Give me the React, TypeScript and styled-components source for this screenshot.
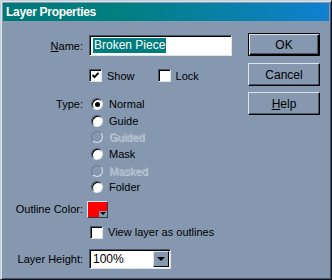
import React from "react";
import styled, { createGlobalStyle } from "styled-components";

const BG = "#8598b0";
const LIGHT = "#dce4ec";
const SHADE = "#45556a";

const GlobalStyle = createGlobalStyle`
  html, body {
    margin: 0;
    padding: 0;
    background: ${BG};
  }
  * {
    box-sizing: border-box;
  }
`;

const Window = styled.div`
  width: 332px;
  height: 280px;
  background: ${BG};
  border: 1px solid;
  border-color: #c4ced8 #0c1218 #0c1218 #c4ced8;
  box-shadow: inset 1px 1px 0 ${LIGHT}, inset -1px -1px 0 ${SHADE};
  padding: 2px;
  font-family: "Liberation Sans", Arial, sans-serif;
  font-size: 11px;
  color: #000;
  display: flex;
  flex-direction: column;
`;

const TitleBar = styled.div`
  height: 18px;
  display: flex;
  align-items: center;
  padding-left: 3px;
  background: linear-gradient(90deg, #007878 0%, #00807f 35%, #1080d0 100%);
  color: #fff;
  font-weight: bold;
  font-size: 12px;
  letter-spacing: -0.3px;
`;

const Body = styled.div`
  display: flex;
  justify-content: space-between;
  padding: 12px 9px 0 0;
`;

const Form = styled.div`
  width: 229px;
  display: flex;
  flex-direction: column;
`;

const Row = styled.div<{ $top: number; $align?: string }>`
  display: grid;
  grid-template-columns: 80px 1fr;
  column-gap: 6px;
  align-items: ${(p) => p.$align || "center"};
  margin-top: ${(p) => p.$top}px;
`;

const Label = styled.div<{ $line?: number }>`
  text-align: right;
  white-space: nowrap;
  line-height: ${(p) => (p.$line ? `${p.$line}px` : "normal")};
`;

const TextField = styled.div`
  height: 21px;
  background: #fff;
  border: 1px solid;
  border-color: ${SHADE} ${LIGHT} ${LIGHT} ${SHADE};
  box-shadow: inset 1px 1px 0 #000;
  display: flex;
  align-items: center;
  padding-left: 3px;
`;

const Selected = styled.span`
  background: #007d7d;
  color: #fff;
  font-size: 12px;
  line-height: 15px;
  padding: 0 1px;
`;

const CheckGroup = styled.div`
  display: flex;
  gap: 23px;
`;

const CheckItem = styled.label<{ $indent?: number }>`
  display: flex;
  align-items: center;
  gap: 5px;
  height: 13px;
  margin-left: ${(p) => p.$indent || 0}px;
  white-space: nowrap;
`;

const Box = styled.span`
  width: 13px;
  height: 13px;
  flex: none;
  background: #fff;
  border: 1px solid;
  border-color: ${SHADE} ${LIGHT} ${LIGHT} ${SHADE};
  box-shadow: inset 1px 1px 0 #000;
  display: flex;
  align-items: center;
  justify-content: center;
`;

const Check = ({ checked, label, indent }: { checked?: boolean; label: string; indent?: number }) => (
  <CheckItem $indent={indent}>
    <Box>
      {checked && (
        <svg width="9" height="9" viewBox="0 0 9 9">
          <path d="M1.5 4 L3.5 6.2 L7.5 1.8" stroke="#000" strokeWidth="1.9" fill="none" />
        </svg>
      )}
    </Box>
    {label}
  </CheckItem>
);

const RadioList = styled.div`
  display: flex;
  flex-direction: column;
  padding-left: 2px;
`;

const RadioItem = styled.div<{ $disabled?: boolean }>`
  height: 16.6px;
  display: flex;
  align-items: center;
  gap: 6px;
  color: ${(p) => (p.$disabled ? "#aeb9c8" : "#000")};
  text-shadow: ${(p) => (p.$disabled ? "1px 1px 0 #c4ceda" : "none")};
`;

const Dot = styled.span<{ $disabled?: boolean; $on?: boolean }>`
  width: 12px;
  height: 12px;
  flex: none;
  border-radius: 50%;
  border: 1px solid;
  border-color: ${(p) => (p.$disabled ? "#6c7c90" : SHADE)} ${LIGHT} ${LIGHT}
    ${(p) => (p.$disabled ? "#6c7c90" : SHADE)};
  background: ${(p) => (p.$disabled ? BG : "#fff")};
  box-shadow: ${(p) => (p.$disabled ? "none" : "inset 1px 1px 0 #000")};
  display: flex;
  align-items: center;
  justify-content: center;
  &::after {
    content: "";
    display: ${(p) => (p.$on ? "block" : "none")};
    width: 5px;
    height: 5px;
    border-radius: 50%;
    background: #000;
  }
`;

const Radio = ({ label, on, disabled }: { label: string; on?: boolean; disabled?: boolean }) => (
  <RadioItem $disabled={disabled}>
    <Dot $on={on} $disabled={disabled} />
    {label}
  </RadioItem>
);

const Swatch = styled.div`
  position: relative;
  width: 21px;
  height: 17px;
  margin-left: -2px;
  background: #ff0000;
  border: 1px solid;
  border-color: #e4eaf0 #303c4a #303c4a #e4eaf0;
`;

const SwatchArrow = styled.span`
  position: absolute;
  right: 0;
  bottom: 0;
  width: 8px;
  height: 6px;
  background: ${BG};
  display: flex;
  align-items: center;
  justify-content: center;
  &::after {
    content: "";
    border-left: 3px solid transparent;
    border-right: 3px solid transparent;
    border-top: 3px solid #000;
  }
`;

const Select = styled.div`
  width: 82px;
  height: 20px;
  background: #fff;
  border: 1px solid;
  border-color: ${SHADE} ${LIGHT} ${LIGHT} ${SHADE};
  box-shadow: inset 1px 1px 0 #000;
  display: flex;
  align-items: stretch;
  padding: 1px 1px 1px 3px;
`;

const SelectValue = styled.span`
  flex: 1;
  display: flex;
  align-items: center;
  font-size: 12px;
`;

const SelectButton = styled.span`
  width: 16px;
  background: ${BG};
  border: 1px solid;
  border-color: ${LIGHT} #000 #000 ${LIGHT};
  display: flex;
  align-items: center;
  justify-content: center;
  &::after {
    content: "";
    border-left: 4px solid transparent;
    border-right: 4px solid transparent;
    border-top: 4px solid #000;
  }
`;

const Buttons = styled.div`
  width: 72px;
  display: flex;
  flex-direction: column;
  gap: 6px;
`;

const Button = styled.button<{ $default?: boolean }>`
  height: 23px;
  width: 72px;
  font-family: inherit;
  font-size: 12px;
  color: #000;
  background: ${BG};
  border: 1px solid;
  border-color: ${(p) => (p.$default ? "#000" : `${LIGHT} #000 #000 ${LIGHT}`)};
  box-shadow: ${(p) =>
    p.$default
      ? `inset 1px 1px 0 ${LIGHT}, inset -1px -1px 0 #000, inset -2px -2px 0 ${SHADE}`
      : `inset -1px -1px 0 ${SHADE}`};
  margin-bottom: ${(p) => (p.$default ? 1 : 0)}px;
  padding: 0;
`;

export default function App() {
  return (
    <>
      <GlobalStyle />
      <Window>
        <TitleBar>Layer Properties</TitleBar>
        <Body>
          <Form>
            <Row $top={2}>
              <Label>
                <u>N</u>ame:
              </Label>
              <TextField>
                <Selected>Broken Piece</Selected>
              </TextField>
            </Row>
            <Row $top={13}>
              <span />
              <CheckGroup>
                <Check checked label="Show" />
                <Check label="Lock" />
              </CheckGroup>
            </Row>
            <Row $top={14} $align="start">
              <Label $line={16.6}>Type:</Label>
              <RadioList>
                <Radio label="Normal" on />
                <Radio label="Guide" />
                <Radio label="Guided" disabled />
                <Radio label="Mask" />
                <Radio label="Masked" disabled />
                <Radio label="Folder" />
              </RadioList>
            </Row>
            <Row $top={5}>
              <Label>Outline Color:</Label>
              <Swatch>
                <SwatchArrow />
              </Swatch>
            </Row>
            <Row $top={8}>
              <span />
              <Check label="View layer as outlines" indent={1} />
            </Row>
            <Row $top={10}>
              <Label>Layer Height:</Label>
              <Select>
                <SelectValue>100%</SelectValue>
                <SelectButton />
              </Select>
            </Row>
          </Form>
          <Buttons>
            <Button $default>OK</Button>
            <Button>Cancel</Button>
            <Button>
              <u>H</u>elp
            </Button>
          </Buttons>
        </Body>
      </Window>
    </>
  );
}
